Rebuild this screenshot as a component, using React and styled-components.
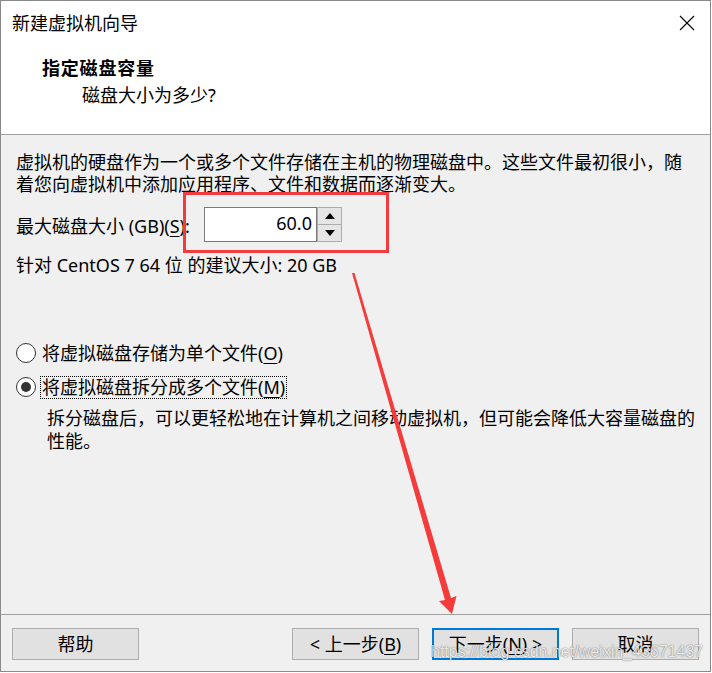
import React from "react"
import styled, { createGlobalStyle } from "styled-components"

const GlobalStyle = createGlobalStyle`
  html, body {
    margin: 0;
    padding: 0;
    background: #ffffff;
  }
  * {
    box-sizing: border-box;
  }
`

const Window = styled.div`
  position: relative;
  width: 711px;
  height: 672px;
  border: 1px solid #8a8a8a;
  background-color: #f0f0f0;
  display: flex;
  flex-direction: column;
  font-family: "Noto Sans", "Noto Sans CJK SC", sans-serif;
  font-size: 18px;
  color: #000;
  overflow: hidden;
`

const TitleBar = styled.div`
  height: 44px;
  background: #ffffff;
  display: flex;
  align-items: center;
  justify-content: space-between;
  padding: 0 15px 0 11px;
`
const TitleText = styled.div`
  line-height: 22px;
`
const CloseIcon = styled.svg`
  width: 16px;
  height: 16px;
  display: block;
`

const Header = styled.div`
  height: 90px;
  background: #ffffff;
  border-bottom: 1px solid #a0a0a0;
  padding: 12px 0 0 41px;
`
const HeaderTitle = styled.div`
  font-weight: 700;
  line-height: 22px;
  letter-spacing: 0.8px;
`
const HeaderSubtitle = styled.div`
  margin: 5px 0 0 40px;
  line-height: 22px;
`

const Body = styled.div`
  flex: 1;
  padding: 16px 15px 0 15px;
`
const Paragraph = styled.p`
  margin: 0;
  line-height: 22px;
  white-space: nowrap;
`

const SizeRow = styled.div`
  margin-top: 12px;
  display: flex;
  align-items: center;
  height: 35px;
`
const SizeLabel = styled.span`
  width: 188px;
  line-height: 22px;
  padding-top: 3px;
`
const SpinBox = styled.div`
  display: flex;
  height: 35px;
`
const SpinValue = styled.div`
  width: 113px;
  height: 35px;
  background: #ffffff;
  border: 1px solid #7a7a7a;
  text-align: right;
  padding-right: 4px;
  line-height: 31px;
  font-size: 18px;
`
const SpinButtons = styled.div`
  width: 25px;
  display: flex;
  flex-direction: column;
`
const SpinButton = styled.div`
  flex: 1;
  background: #e5e5e5;
  border: 1px solid #acacac;
  border-top-width: ${(p) => (p.$down ? "0" : "1px")};
  display: flex;
  align-items: center;
  justify-content: center;
`

const Hint = styled.div`
  margin-top: 12px;
  line-height: 22px;
`

const RadioGroup = styled.div`
  margin-top: 65px;
  display: flex;
  flex-direction: column;
  gap: 10px;
`
const RadioRow = styled.div`
  display: flex;
  align-items: center;
  height: 24px;
`
const RadioCircle = styled.span`
  width: 20px;
  height: 20px;
  border-radius: 50%;
  border: 1px solid #333;
  background: #ffffff;
  display: flex;
  align-items: center;
  justify-content: center;
  flex-shrink: 0;
  &::after {
    content: "";
    display: ${(p) => (p.$checked ? "block" : "none")};
    width: 10px;
    height: 10px;
    border-radius: 50%;
    background: #333;
  }
`
const RadioLabel = styled.span`
  margin-left: 4px;
  padding: 0 1px;
  line-height: 21px;
  border: 1px ${(p) => (p.$focused ? "dotted #000" : "solid transparent")};
`
const Description = styled.p`
  margin: 8px 0 0 31px;
  line-height: 23px;
  white-space: nowrap;
`

const Mnemonic = styled.span`
  text-decoration: underline;
  text-underline-offset: 3px;
`

const Footer = styled.div`
  height: 57px;
  border-top: 1px solid #a0a0a0;
  display: flex;
  align-items: flex-start;
  padding: 13px 11px 0 11px;
`
const Spacer = styled.div`
  flex: 1;
`
const ButtonGroup = styled.div`
  display: flex;
  gap: 13px;
`
const Button = styled.button`
  width: 127px;
  height: 32px;
  background: #e1e1e1;
  border: ${(p) => (p.$primary ? "2px solid #0078d7" : "1px solid #adadad")};
  font-family: "Noto Sans", "Noto Sans CJK SC", sans-serif;
  font-size: 18px;
  color: #000;
  padding: 0;
  line-height: 22px;
  border-radius: 0;
`

const RedFrame = styled.div`
  position: absolute;
  left: 182px;
  top: 191px;
  width: 206px;
  height: 61px;
  border: 3px solid #f43a3f;
  pointer-events: none;
`
const ArrowLayer = styled.svg`
  position: absolute;
  left: 0;
  top: 0;
  pointer-events: none;
`
const Watermark = styled.div`
  position: absolute;
  left: 430px;
  top: 642px;
  font-family: "Liberation Sans", Arial, sans-serif;
  font-size: 16px;
  line-height: 18px;
  color: rgba(255, 255, 255, 0.85);
  text-shadow: 0 0 1px rgba(0, 0, 0, 0.45), 0 0 2px rgba(0, 0, 0, 0.25);
  pointer-events: none;
  white-space: nowrap;
`

const App = () => {
  return (
    <>
      <GlobalStyle />
      <Window>
        <TitleBar>
          <TitleText>新建虚拟机向导</TitleText>
          <CloseIcon viewBox="0 0 16 16">
            <path d="M1 1 L15 15 M15 1 L1 15" stroke="#000" strokeWidth="1.1" fill="none" />
          </CloseIcon>
        </TitleBar>
        <Header>
          <HeaderTitle>指定磁盘容量</HeaderTitle>
          <HeaderSubtitle>磁盘大小为多少?</HeaderSubtitle>
        </Header>
        <Body>
          <Paragraph>
            虚拟机的硬盘作为一个或多个文件存储在主机的物理磁盘中。这些文件最初很小，随
            <br />
            着您向虚拟机中添加应用程序、文件和数据而逐渐变大。
          </Paragraph>
          <SizeRow>
            <SizeLabel>
              最大磁盘大小 (GB)(<Mnemonic>S</Mnemonic>):
            </SizeLabel>
            <SpinBox>
              <SpinValue>60.0</SpinValue>
              <SpinButtons>
                <SpinButton>
                  <svg width="10" height="6" viewBox="0 0 10 6">
                    <path d="M0 6 L5 0 L10 6 Z" fill="#000" />
                  </svg>
                </SpinButton>
                <SpinButton $down>
                  <svg width="10" height="6" viewBox="0 0 10 6">
                    <path d="M0 0 L10 0 L5 6 Z" fill="#000" />
                  </svg>
                </SpinButton>
              </SpinButtons>
            </SpinBox>
          </SizeRow>
          <Hint>针对 CentOS 7 64 位 的建议大小: 20 GB</Hint>
          <RadioGroup>
            <RadioRow>
              <RadioCircle />
              <RadioLabel>
                将虚拟磁盘存储为单个文件(<Mnemonic>O</Mnemonic>)
              </RadioLabel>
            </RadioRow>
            <RadioRow>
              <RadioCircle $checked />
              <RadioLabel $focused>
                将虚拟磁盘拆分成多个文件(<Mnemonic>M</Mnemonic>)
              </RadioLabel>
            </RadioRow>
          </RadioGroup>
          <Description>
            拆分磁盘后，可以更轻松地在计算机之间移动虚拟机，但可能会降低大容量磁盘的
            <br />
            性能。
          </Description>
        </Body>
        <Footer>
          <Button>帮助</Button>
          <Spacer />
          <ButtonGroup>
            <Button>
              &lt; 上一步(<Mnemonic>B</Mnemonic>)
            </Button>
            <Button $primary>
              下一步(<Mnemonic>N</Mnemonic>) &gt;
            </Button>
            <Button>取消</Button>
          </ButtonGroup>
        </Footer>
        <RedFrame />
        <ArrowLayer width="711" height="672" viewBox="0 0 711 672">
          <polygon
            points="351,272 353.5,272 450,597 455.5,595 451,613 438,600 444,599"
            fill="#f53b3b"
          />
        </ArrowLayer>
        <Watermark>https://blog.csdn.net/weixin_43671437</Watermark>
      </Window>
    </>
  )
}

export default App
